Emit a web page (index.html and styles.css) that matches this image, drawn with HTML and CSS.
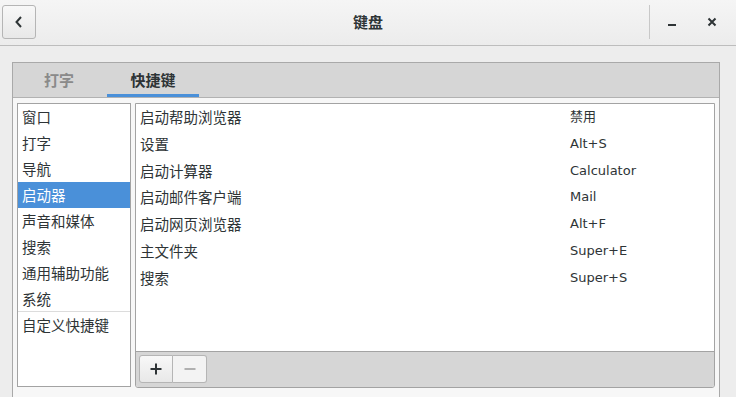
FILE: index.html
```html
<!DOCTYPE html>
<html lang="zh-CN">
  <head>
    <meta charset="UTF-8" />
    <title>键盘</title>
    <link rel="stylesheet" href="styles.css">
  </head>
  <body>
    <header class="titlebar">
      <button class="back-btn" aria-label="返回">
        <svg width="12" height="14" viewBox="0 0 12 14"><path d="M8 2 L3.5 7 L8 12" fill="none" stroke="#2e3436" stroke-width="2"/></svg>
      </button>
      <h1 class="title">键盘</h1>
      <div class="win-controls">
        <span class="sep"></span>
        <button class="win-btn" aria-label="最小化">
          <svg width="10" height="10" viewBox="0 0 10 10"><path d="M1 8 H9" stroke="#2e3436" stroke-width="2"/></svg>
        </button>
        <button class="win-btn" aria-label="关闭">
          <svg width="10" height="10" viewBox="0 0 10 10"><path d="M1.5 1.5 L8.5 8.5 M8.5 1.5 L1.5 8.5" stroke="#2e3436" stroke-width="2"/></svg>
        </button>
      </div>
    </header>

    <main class="main">
      <div class="notebook">
        <div class="tabs">
          <div class="tab">打字</div>
          <div class="tab active">快捷键</div>
        </div>

        <div class="page">
          <ul class="sections">
            <li>窗口</li>
            <li>打字</li>
            <li>导航</li>
            <li class="selected">启动器</li>
            <li>声音和媒体</li>
            <li>搜索</li>
            <li>通用辅助功能</li>
            <li class="last">系统</li>
            <li>自定义快捷键</li>
          </ul>

          <div class="shortcuts">
            <div class="shortcut-list">
              <div class="row"><span class="name">启动帮助浏览器</span><span class="accel">禁用</span></div>
              <div class="row"><span class="name">设置</span><span class="accel">Alt+S</span></div>
              <div class="row"><span class="name">启动计算器</span><span class="accel">Calculator</span></div>
              <div class="row"><span class="name">启动邮件客户端</span><span class="accel">Mail</span></div>
              <div class="row"><span class="name">启动网页浏览器</span><span class="accel">Alt+F</span></div>
              <div class="row"><span class="name">主文件夹</span><span class="accel">Super+E</span></div>
              <div class="row"><span class="name">搜索</span><span class="accel">Super+S</span></div>
            </div>
            <div class="toolbar">
              <div class="btn-group">
                <button class="tool-btn">
                  <svg width="12" height="12" viewBox="0 0 12 12"><path d="M6 0.5 V11.5 M0.5 6 H11.5" stroke="#2e3436" stroke-width="2"/></svg>
                </button>
                <button class="tool-btn disabled">
                  <svg width="12" height="12" viewBox="0 0 12 12"><path d="M0.5 6 H11.5" stroke="#b0b0b0" stroke-width="2"/></svg>
                </button>
              </div>
            </div>
          </div>
        </div>
      </div>
    </main>
  </body>
</html>
```

FILE: styles.css
```css
* {
  margin: 0;
  padding: 0;
  box-sizing: border-box;
}

body {
  width: 736px;
  height: 397px;
  overflow: hidden;
  background: #ededed;
  color: #2e3436;
  font-family: "DejaVu Sans", "Noto Sans CJK SC", sans-serif;
  font-size: 13px;
}

button {
  font: inherit;
  cursor: pointer;
}

/* title bar */
.titlebar {
  height: 46px;
  display: flex;
  align-items: center;
  padding: 0 0 1px 2px;
  background: linear-gradient(to bottom, #f5f5f5, #ececec);
  border-bottom: 1px solid #bdbdbd;
  position: relative;
}

.back-btn {
  width: 34px;
  height: 34px;
  border: 1px solid #b5b5b5;
  border-radius: 3px;
  background: linear-gradient(to bottom, #f8f8f8, #e8e8e8);
  display: flex;
  align-items: center;
  justify-content: center;
}

.title {
  position: absolute;
  left: 0;
  right: 0;
  top: 0;
  height: 44px;
  line-height: 44px;
  text-align: center;
  font-family: "Noto Sans CJK SC", sans-serif;
  font-size: 15px;
  font-weight: 700;
  pointer-events: none;
}

.win-controls {
  margin-left: auto;
  display: flex;
  align-items: center;
  height: 100%;
}

.sep {
  width: 1px;
  height: 34px;
  background: #c8c8c8;
  margin-right: 9px;
}

.win-btn {
  width: 26px;
  height: 26px;
  border: none;
  background: none;
  display: flex;
  align-items: center;
  justify-content: center;
  margin-right: 14px;
}

.win-btn:last-child {
  margin-right: 11px;
}

/* notebook */
.main {
  padding: 16px 16px 0 12px;
}

.notebook {
  border: 1px solid #a9a9a9;
  border-bottom: none;
  height: 335px;
  background: #f7f7f7;
}

.tabs {
  height: 35px;
  display: flex;
  background: #d6d6d6;
  border-bottom: 1px solid #b2b2b2;
  padding-left: 10px;
}

.tab {
  height: 34px;
  line-height: 34px;
  padding: 0 22px 0 21px;
  font-family: "Noto Sans CJK SC", sans-serif;
  font-size: 15px;
  font-weight: 700;
  color: #8a8a8a;
}

.tab.active {
  color: #2e3436;
  border-bottom: 3px solid #4a90d9;
  margin-left: 11px;
  width: 92px;
  text-align: center;
  padding: 0;
  line-height: 33px;
}

.page {
  display: flex;
  gap: 4px;
  padding: 5px 4px 0 4px;
}

.sections {
  list-style: none;
  width: 114px;
  height: 284px;
  background: #fff;
  border: 1px solid #a3a3a3;
}

.sections li {
  height: 26px;
  line-height: 25px;
  padding-left: 4px;
  font-family: "Noto Sans CJK SC", sans-serif;
  font-size: 14.5px;
}

.sections li.selected {
  background: #4a90d9;
  color: #fff;
}

.sections li.last {
  border-bottom: 1px solid #dcdcdc;
}

.shortcuts {
  width: 580px;
  height: 285px;
  border: 1px solid #a3a3a3;
  border-radius: 0 0 3px 3px;
  display: flex;
  flex-direction: column;
  overflow: hidden;
}

.shortcut-list {
  flex: 1;
  background: #fff;
}

.row {
  display: flex;
  height: 26.8px;
  line-height: 25px;
  padding-left: 4px;
}

.row .name {
  width: 430px;
  font-family: "Noto Sans CJK SC", sans-serif;
  font-size: 14.5px;
}

.row .accel {
  font-size: 13px;
}

.toolbar {
  height: 36px;
  background: #d6d6d6;
  border-top: 1px solid #a3a3a3;
  padding: 3px 3px;
}

.btn-group {
  display: flex;
}

.tool-btn {
  width: 34px;
  height: 28px;
  border: 1px solid #b5b5b5;
  background: linear-gradient(to bottom, #f8f8f8, #e8e8e8);
  display: flex;
  align-items: center;
  justify-content: center;
}

.tool-btn:first-child {
  border-radius: 3px 0 0 3px;
}

.tool-btn.disabled {
  border-left: none;
  border-radius: 0 3px 3px 0;
  background: #f3f3f3;
}
```
